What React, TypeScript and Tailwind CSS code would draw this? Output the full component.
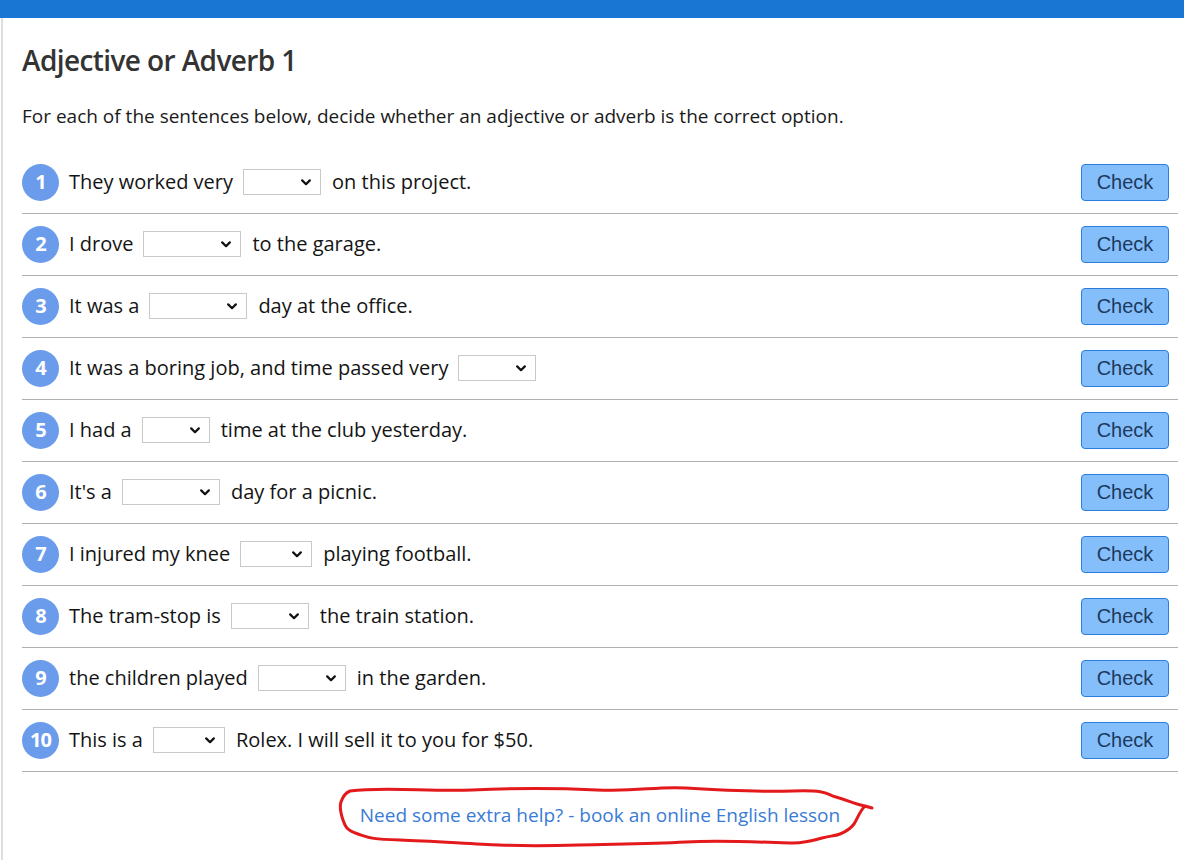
import React from "react";

type Row = { n: number; before: string; w: number; after: string };

const rows: Row[] = [
  { n: 1, before: "They worked very", w: 78, after: "on this project." },
  { n: 2, before: "I drove", w: 98, after: "to the garage." },
  { n: 3, before: "It was a", w: 98, after: "day at the office." },
  { n: 4, before: "It was a boring job, and time passed very", w: 78, after: "" },
  { n: 5, before: "I had a", w: 68, after: "time at the club yesterday." },
  { n: 6, before: "It's a", w: 98, after: "day for a picnic." },
  { n: 7, before: "I injured my knee", w: 72, after: "playing football." },
  { n: 8, before: "The tram-stop is", w: 78, after: "the train station." },
  { n: 9, before: "the children played", w: 88, after: "in the garden." },
  { n: 10, before: "This is a", w: 72, after: "Rolex. I will sell it to you for $50." },
];

function FakeSelect({ w }: { w: number }) {
  return (
    <span
      className="relative inline-flex h-[26px] items-center justify-end border border-[#c9c9c9] bg-white pr-[9px]"
      style={{ width: w }}
    >
      <svg width="10" height="7" viewBox="0 0 10 7" fill="none">
        <path d="M1.2 1.4 L5 5.2 L8.8 1.4" stroke="#111" strokeWidth="2.2" strokeLinecap="round" strokeLinejoin="round" />
      </svg>
    </span>
  );
}

export default function App() {
  return (
    <div className="min-h-[860px] bg-white" style={{ fontFamily: '"Open Sans", "Noto Sans", sans-serif' }}>
      <div className="h-[18px] bg-[#1976d2]" />
      <div className="ml-[1px] min-h-[842px] border-l-2 border-[#dedede] pl-[19px] pr-[6px]">
        <h1 className="pt-[22px] text-[28px] font-semibold leading-[40px] tracking-[-0.6px] text-[#333]">Adjective or Adverb 1</h1>
        <p className="mt-[24px] text-[19px] leading-[24px] text-[#1a1a1a]">
          For each of the sentences below, decide whether an adjective or adverb is the correct option.
        </p>
        <div className="mt-[24px]">
          {rows.map((r) => (
            <div key={r.n} className="flex h-[62px] items-center border-b border-[#b0b0b0] pb-[1px]">
              <span className="flex h-[37px] w-[37px] shrink-0 items-center justify-center rounded-full bg-[#6b9cec] text-[20px] font-bold tracking-[-1px] text-white">
                {r.n}
              </span>
              <span className="ml-[10px] flex items-center text-[20px] text-[#141414]">
                <span>{r.before}</span>
                <span className="ml-[10px] mr-[11px] flex items-center">
                  <FakeSelect w={r.w} />
                </span>
                {r.after && <span>{r.after}</span>}
              </span>
              <button
                className="ml-auto mr-[9px] h-[37px] w-[88px] rounded-[4px] border border-[#2a7de0] bg-[#85bffb] text-[20px] text-[#1c3a5e]"
                style={{ fontFamily: '"Liberation Sans", Arial, sans-serif' }}
              >
                Check
              </button>
            </div>
          ))}
        </div>
        <div className="pt-[31px] text-center">
          <span className="relative inline-block text-[19px] leading-[24px] text-[#3a7bd5]">
            Need some extra help? - book an online English lesson
            <svg
              className="pointer-events-none absolute left-[-25px] top-[-23px]"
              width="545"
              height="72"
              viewBox="0 0 545 72"
              fill="none"
            >
              <path
                d="M15 11 C 50 6, 95 12, 137 10 S 220 8, 262 10 S 320 6, 351 8 S 420 12, 458 11 S 490 14, 501 17 S 515 22, 522 24 L 537 28 L 530 26 C 524 32, 522 40, 519 44 S 510 52, 505 54 S 494 56, 487 58 S 470 63, 458 63 S 390 60, 351 62 S 280 64, 244 65 S 190 66, 164 65 S 95 61, 65 60 S 35 58, 23 54 S 10 46, 8 40 S 4 28, 6 22 S 10 13, 15 11 Z"
                stroke="#e3191b"
                strokeWidth="3"
                strokeLinejoin="round"
                strokeLinecap="round"
              />
            </svg>
          </span>
        </div>
      </div>
    </div>
  );
}
